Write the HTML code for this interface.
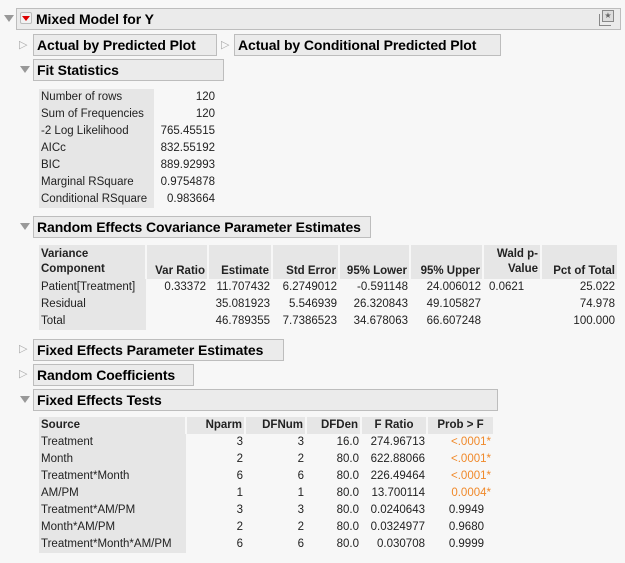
<!DOCTYPE html>
<html><head><style>
body{margin:0;width:625px;height:563px;background:#f7f7f7;font-family:"Liberation Sans",sans-serif;font-size:11.5px;color:#222;position:relative;overflow:hidden}
.a{position:absolute}
.hb{position:absolute;background:#ebebeb;border:1px solid #bdbdbd;box-sizing:border-box;font-weight:bold;font-size:14px;letter-spacing:-0.1px;color:#000;padding-left:3px;line-height:21px;white-space:nowrap;overflow:hidden}
.tri{position:absolute;width:0;height:0}
.down{border-left:5px solid transparent;border-right:5px solid transparent;border-top:7px solid #999}
.rt{position:absolute;font-size:11px;color:#aaa;line-height:10px}
table{position:absolute;border-collapse:collapse;table-layout:fixed}
td{padding:0 2px;height:17px;line-height:17px;white-space:nowrap;text-align:right}
td.l{text-align:left;background:#e6e6e6}
tr.h td{background:#e6e6e6;font-weight:bold;border-left:2px solid #f7f7f7;line-height:15px}
tr.h td:first-child{border-left:none}
.o{color:#f0892a}
</style></head><body>
<div class="tri down" style="left:4px;top:15px"></div>
<div class="hb" style="left:16px;top:8px;width:605px;height:22px;padding-left:19px">Mixed Model for Y</div>
<div class="a" style="left:20px;top:12px;width:12px;height:12px;background:#f2f2f2;border:1px solid #bbb;border-radius:2px;box-sizing:border-box"><div class="tri" style="left:1px;top:3px;border-left:4px solid transparent;border-right:4px solid transparent;border-top:5px solid #d00"></div></div>
<div class="a" style="left:602px;top:10px;width:12px;height:12px;border:1px solid #888;box-sizing:border-box;background:#ddd;font-size:8px;line-height:10px;text-align:center;color:#666">★</div>
<div class="a" style="left:599px;top:14px;width:11px;height:11px;border-left:1px solid #888;border-bottom:1px solid #888"></div>

<div class="rt" style="left:19px;top:40px">▷</div>
<div class="hb" style="left:33px;top:34px;width:184px;height:22px">Actual by Predicted Plot</div>
<div class="rt" style="left:221px;top:40px">▷</div>
<div class="hb" style="left:234px;top:34px;width:267px;height:22px">Actual by Conditional Predicted Plot</div>

<div class="tri down" style="left:20px;top:66px"></div>
<div class="hb" style="left:33px;top:59px;width:191px;height:22px">Fit Statistics</div>
<table style="left:39px;top:89px;width:178px"><colgroup><col style="width:115px"><col style="width:63px"></colgroup>
<tr><td class="l">Number of rows</td><td>120</td></tr>
<tr><td class="l">Sum of Frequencies</td><td>120</td></tr>
<tr><td class="l">-2 Log Likelihood</td><td>765.45515</td></tr>
<tr><td class="l">AICc</td><td>832.55192</td></tr>
<tr><td class="l">BIC</td><td>889.92993</td></tr>
<tr><td class="l">Marginal RSquare</td><td>0.9754878</td></tr>
<tr><td class="l">Conditional RSquare</td><td>0.983664</td></tr>
</table>

<div class="tri down" style="left:20px;top:223px"></div>
<div class="hb" style="left:33px;top:216px;width:338px;height:22px">Random Effects Covariance Parameter Estimates</div>
<table style="left:39px;top:245px;width:578px"><colgroup><col style="width:107px"><col style="width:62px"><col style="width:64px"><col style="width:67px"><col style="width:71px"><col style="width:73px"><col style="width:58px"><col style="width:76px"></colgroup>
<tr class="h"><td style="text-align:left;height:34px">Variance<br>Component</td><td style="vertical-align:bottom">Var Ratio</td><td style="vertical-align:bottom">Estimate</td><td style="vertical-align:bottom">Std Error</td><td style="vertical-align:bottom">95% Lower</td><td style="vertical-align:bottom">95% Upper</td><td>Wald p-<br>Value</td><td style="vertical-align:bottom">Pct of Total</td></tr>
<tr><td class="l">Patient[Treatment]</td><td>0.33372</td><td>11.707432</td><td>6.2749012</td><td>-0.591148</td><td>24.006012</td><td style="text-align:left;padding-left:6px">0.0621</td><td>25.022</td></tr>
<tr><td class="l">Residual</td><td></td><td>35.081923</td><td>5.546939</td><td>26.320843</td><td>49.105827</td><td></td><td>74.978</td></tr>
<tr><td class="l">Total</td><td></td><td>46.789355</td><td>7.7386523</td><td>34.678063</td><td>66.607248</td><td></td><td>100.000</td></tr>
</table>

<div class="rt" style="left:19px;top:344px">▷</div>
<div class="hb" style="left:33px;top:339px;width:251px;height:22px">Fixed Effects Parameter Estimates</div>
<div class="rt" style="left:19px;top:369px">▷</div>
<div class="hb" style="left:33px;top:364px;width:161px;height:22px">Random Coefficients</div>
<div class="tri down" style="left:20px;top:396px"></div>
<div class="hb" style="left:33px;top:389px;width:465px;height:22px">Fixed Effects Tests</div>
<table style="left:39px;top:417px;width:454px"><colgroup><col style="width:147px"><col style="width:59px"><col style="width:61px"><col style="width:55px"><col style="width:66px"><col style="width:66px"></colgroup>
<tr class="h"><td style="text-align:left;height:17px;line-height:17px">Source</td><td style="line-height:17px">Nparm</td><td style="line-height:17px">DFNum</td><td style="line-height:17px">DFDen</td><td style="text-align:center;line-height:17px">F Ratio</td><td style="text-align:center;line-height:17px">Prob &gt; F</td></tr>
<tr><td class="l">Treatment</td><td>3</td><td>3</td><td>16.0</td><td>274.96713</td><td class="o">&lt;.0001*</td></tr>
<tr><td class="l">Month</td><td>2</td><td>2</td><td>80.0</td><td>622.88066</td><td class="o">&lt;.0001*</td></tr>
<tr><td class="l">Treatment*Month</td><td>6</td><td>6</td><td>80.0</td><td>226.49464</td><td class="o">&lt;.0001*</td></tr>
<tr><td class="l">AM/PM</td><td>1</td><td>1</td><td>80.0</td><td>13.700114</td><td class="o">0.0004*</td></tr>
<tr><td class="l">Treatment*AM/PM</td><td>3</td><td>3</td><td>80.0</td><td>0.0240643</td><td style="padding-right:9px">0.9949</td></tr>
<tr><td class="l">Month*AM/PM</td><td>2</td><td>2</td><td>80.0</td><td>0.0324977</td><td style="padding-right:9px">0.9680</td></tr>
<tr><td class="l">Treatment*Month*AM/PM</td><td>6</td><td>6</td><td>80.0</td><td>0.030708</td><td style="padding-right:9px">0.9999</td></tr>
</table>
</body></html>
